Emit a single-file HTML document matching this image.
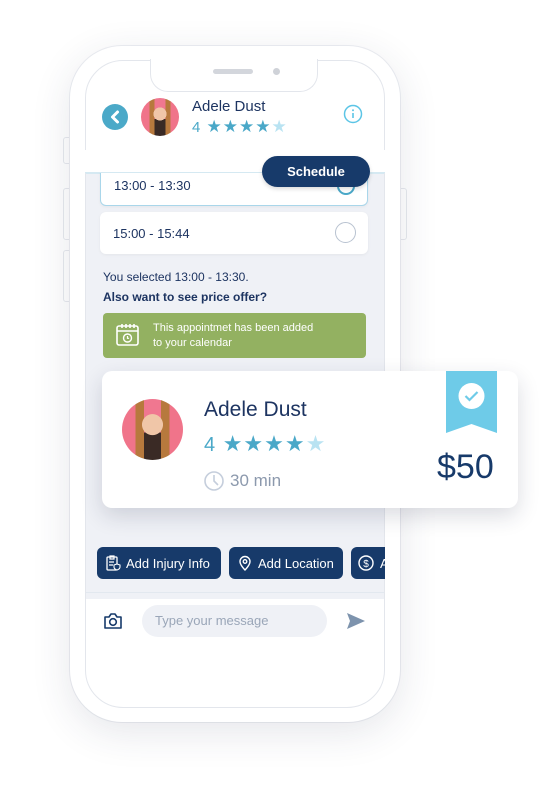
<!DOCTYPE html>
<html><head><meta charset="utf-8"><style>
*{margin:0;padding:0;box-sizing:border-box}
body{width:547px;height:796px;background:#fff;position:relative;overflow:hidden;font-family:"Liberation Sans",sans-serif}
.abs{position:absolute}
.phone{left:70px;top:46px;width:330px;height:676px;border-radius:52px;background:#fff;box-shadow:0 10px 40px rgba(40,50,80,.12),0 0 0 1px #eef0f4}
.screen{left:85px;top:60px;width:300px;height:648px;border-radius:38px;border:1px solid #e3e6ec;overflow:hidden;background:#fff}
.btnside{background:#fff;border:1px solid #e6e8ee;border-radius:3px}
.slot{background:#fff;border-radius:6px;font-size:13px;color:#1d3461;padding-left:13px;display:flex;align-items:center;box-shadow:0 1px 3px rgba(0,0,0,.05)}
.av{border-radius:50%;background:radial-gradient(circle at 50% 42%,#f0c6a8 0 22%,transparent 23%),linear-gradient(90deg,#f0748a 0 22%,#b7793d 22% 36%,transparent 36% 64%,#b7793d 64% 78%,#f0748a 78%),linear-gradient(#f07790 0 55%,#3a2a25 55%)}
.chip{background:#173a6a;color:#fff;border-radius:6px;font-size:13px;display:flex;align-items:center;top:547px;height:32px}
</style></head><body>
<div class="abs btnside" style="left:63px;top:137px;width:9px;height:27px"></div>
<div class="abs btnside" style="left:63px;top:188px;width:9px;height:52px"></div>
<div class="abs btnside" style="left:63px;top:250px;width:9px;height:52px"></div>
<div class="abs btnside" style="left:398px;top:188px;width:9px;height:52px"></div>
<div class="abs phone"></div>
<div class="abs screen">
  <div class="abs" style="left:0;top:112px;width:300px;height:426px;background:#eff1f6;border-top:1px solid #d5e9f2"></div>
  <div class="abs" style="left:0;top:531px;width:300px;height:1px;background:#e2e8ef"></div>
</div>
<div class="abs" style="left:150px;top:59px;width:168px;height:33px;background:#fff;border:1px solid #e3e6ec;border-top:none;border-radius:0 0 18px 18px"></div>
<div class="abs" style="left:213px;top:69px;width:40px;height:5px;border-radius:3px;background:#d3d6dc"></div>
<div class="abs" style="left:273px;top:68px;width:7px;height:7px;border-radius:50%;background:#cfd2d8"></div>
<div class="abs" style="left:102px;top:104px;width:26px;height:26px;border-radius:50%;background:#4ba9c8"></div>
<svg class="abs" style="left:102px;top:104px" width="26" height="26"><path d="M15.5 8 L10.5 13 L15.5 18" stroke="#fff" stroke-width="3" fill="none" stroke-linecap="round" stroke-linejoin="round"/></svg>
<div class="abs av" style="left:141px;top:98px;width:38px;height:38px"></div>
<div class="abs" style="left:192px;top:98px;font-size:15px;color:#1d3461">Adele Dust</div>
<div class="abs" style="left:192px;top:117px;font-size:15px;color:#4aa8c8;letter-spacing:1px">4 <span style="font-size:17px">★★★★</span><span style="color:#b9e3f2;font-size:17px">★</span></div>
<svg class="abs" style="left:343px;top:104px" width="20" height="20"><circle cx="10" cy="10" r="8.5" stroke="#5cc5e6" stroke-width="1.5" fill="none"/><path d="M10 9v5" stroke="#5cc5e6" stroke-width="1.6"/><circle cx="10" cy="6.3" r="1" fill="#5cc5e6"/></svg>
<div class="abs slot" style="left:100px;top:164px;width:268px;height:42px;border:1px solid #a9d6ea">13:00 - 13:30</div>
<div class="abs" style="left:337px;top:177px;width:18px;height:18px;border-radius:50%;border:2px solid #4aa8c8"></div>
<div class="abs" style="left:85px;top:150px;width:300px;height:22px;background:#fff"></div>
<div class="abs" style="left:85px;top:172px;width:300px;height:1px;background:#d5e9f2"></div>
<div class="abs" style="left:262px;top:156px;width:108px;height:31px;border-radius:16px;background:#173a6a;color:#fff;font-size:13px;font-weight:bold;display:flex;align-items:center;justify-content:center;box-shadow:0 2px 4px rgba(0,0,0,.15)">Schedule</div>
<div class="abs slot" style="left:100px;top:212px;width:268px;height:42px">15:00 - 15:44</div>
<div class="abs" style="left:335px;top:222px;width:21px;height:21px;border-radius:50%;border:1.5px solid #b8c2d0"></div>
<div class="abs" style="left:103px;top:270px;font-size:12px;color:#1d3461">You selected 13:00 - 13:30.</div>
<div class="abs" style="left:103px;top:290px;font-size:12px;color:#1d3461;font-weight:bold">Also want to see price offer?</div>
<div class="abs" style="left:103px;top:313px;width:263px;height:45px;background:#93b161;border-radius:4px"></div>
<svg class="abs" style="left:115px;top:322px" width="26" height="26"><rect x="2" y="4" width="21" height="19" rx="2" stroke="#fff" stroke-width="1.6" fill="none"/><path d="M2 9h21M7 2v4M11 2v4M15 2v4M19 2v4" stroke="#fff" stroke-width="1.6"/><circle cx="12.5" cy="16" r="4" stroke="#fff" stroke-width="1.4" fill="none"/><path d="M12.5 14v2.3h1.6" stroke="#fff" stroke-width="1.2" fill="none"/></svg>
<div class="abs" style="left:153px;top:321px;font-size:11px;color:#fff;line-height:15px">This appointmet has been added<br>to your calendar</div>
<div class="abs" style="left:102px;top:371px;width:416px;height:137px;background:#fff;border-radius:10px;box-shadow:0 8px 22px rgba(30,40,70,.16)"></div>
<div class="abs av" style="left:122px;top:399px;width:61px;height:61px"></div>
<div class="abs" style="left:204px;top:398px;font-size:21px;color:#1d3461">Adele Dust</div>
<div class="abs" style="left:204px;top:431px;font-size:20px;color:#4aa8c8;letter-spacing:1px">4 <span style="font-size:22px">★★★★</span><span style="color:#b9e3f2;font-size:22px">★</span></div>
<svg class="abs" style="left:203px;top:470px" width="22" height="22"><circle cx="11" cy="11" r="9" stroke="#c5cedc" stroke-width="1.6" fill="none"/><path d="M11 5v6l4 4" stroke="#c5cedc" stroke-width="1.6" fill="none"/></svg>
<div class="abs" style="left:230px;top:471px;font-size:17px;color:#8c99ad">30 min</div>
<svg class="abs" style="left:446px;top:371px" width="51" height="62"><path d="M0 0H51V62L25.5 53L0 62Z" fill="#6ecbe8"/><circle cx="25.5" cy="25" r="13" fill="#fff"/><path d="M19.5 25l4 4 8-8" stroke="#6ecbe8" stroke-width="2.2" fill="none"/></svg>
<div class="abs" style="left:437px;top:448px;font-size:34px;color:#173a6a">$50</div>
<div class="abs chip" style="left:97px;width:124px;padding-left:29px">Add Injury Info</div>
<svg class="abs" style="left:105px;top:555px" width="16" height="16"><rect x="2" y="2" width="10" height="13" rx="1" stroke="#fff" stroke-width="1.3" fill="none"/><path d="M5 1h4v3H5zM4 7h5M4 10h4" stroke="#fff" stroke-width="1.2" fill="none"/><path d="M12 9l3 1v2c0 2-3 3-3 3s-3-1-3-3v-2z" fill="#173a6a" stroke="#fff" stroke-width="1.1"/></svg>
<div class="abs chip" style="left:229px;width:114px;padding-left:29px">Add Location</div>
<svg class="abs" style="left:238px;top:555px" width="14" height="16"><path d="M7 15s-5-5-5-8.5a5 5 0 0 1 10 0C12 10 7 15 7 15z" stroke="#fff" stroke-width="1.4" fill="none"/><circle cx="7" cy="6.5" r="1.8" stroke="#fff" stroke-width="1.3" fill="none"/></svg>
<div class="abs" style="left:351px;top:547px;width:34px;height:32px;overflow:hidden"><div class="abs chip" style="left:0;top:0;width:80px;padding-left:29px">Add</div></div>
<svg class="abs" style="left:358px;top:555px" width="16" height="16"><circle cx="8" cy="8" r="7" stroke="#fff" stroke-width="1.4" fill="none"/><text x="8" y="12" font-size="10" fill="#fff" text-anchor="middle" font-family="Liberation Sans">$</text></svg>
<svg class="abs" style="left:103px;top:612px" width="20" height="18"><path d="M2 5h4l2-3h4l2 3h4v11H2z" stroke="#173a6a" stroke-width="1.6" fill="none" stroke-linejoin="round"/><circle cx="10" cy="10" r="3.3" stroke="#173a6a" stroke-width="1.6" fill="none"/></svg>
<div class="abs" style="left:142px;top:605px;width:185px;height:32px;border-radius:16px;background:#eff1f6;font-size:13px;color:#9aa6b8;padding:8px 0 0 13px">Type your message</div>
<svg class="abs" style="left:346px;top:612px" width="20" height="18"><path d="M1 1L19 9L1 17L4 9Z" fill="#7d93ad"/></svg>
</body></html>
